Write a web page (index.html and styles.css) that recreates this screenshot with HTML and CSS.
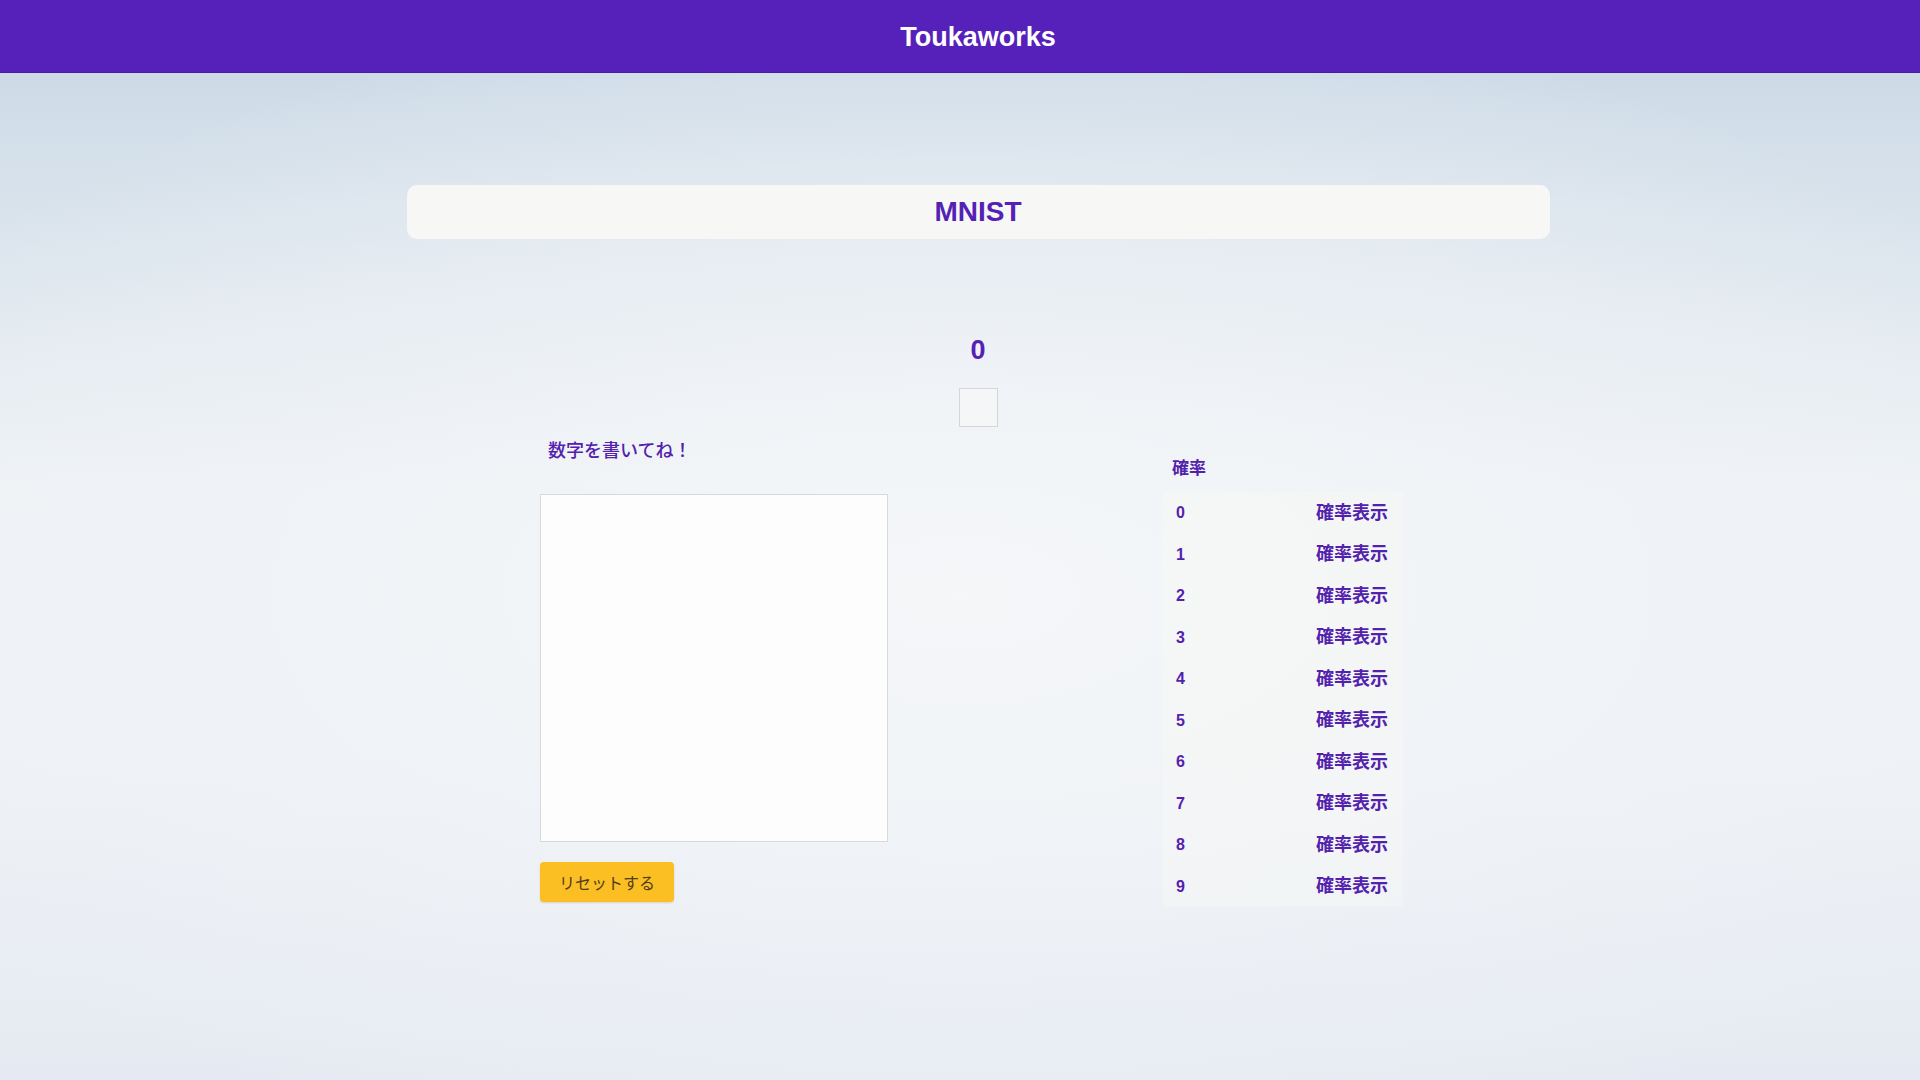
FILE: index.html
```html
<!DOCTYPE html>
<html lang="ja">
<head>
<meta charset="utf-8">
<title>Toukaworks MNIST</title>
<link rel="stylesheet" href="styles.css">
</head>
<body>
<header class="topbar">
  <h1 class="brand">Toukaworks</h1>
</header>
<main class="page">
  <section class="title-card">
    <h2 class="title">MNIST</h2>
  </section>
  <div class="prediction">0</div>
  <div class="preview"></div>
  <section class="workspace">
    <div class="draw-col">
      <p class="draw-label">数字を書いてね！</p>
      <div class="canvas"></div>
      <button class="reset-btn" type="button">リセットする</button>
    </div>
    <div class="prob-col">
      <div class="prob-head">確率</div>
      <div class="prob-table">
        <div class="prob-row"><span class="digit">0</span><span class="prob">確率表示</span></div>
        <div class="prob-row"><span class="digit">1</span><span class="prob">確率表示</span></div>
        <div class="prob-row"><span class="digit">2</span><span class="prob">確率表示</span></div>
        <div class="prob-row"><span class="digit">3</span><span class="prob">確率表示</span></div>
        <div class="prob-row"><span class="digit">4</span><span class="prob">確率表示</span></div>
        <div class="prob-row"><span class="digit">5</span><span class="prob">確率表示</span></div>
        <div class="prob-row"><span class="digit">6</span><span class="prob">確率表示</span></div>
        <div class="prob-row"><span class="digit">7</span><span class="prob">確率表示</span></div>
        <div class="prob-row"><span class="digit">8</span><span class="prob">確率表示</span></div>
        <div class="prob-row"><span class="digit">9</span><span class="prob">確率表示</span></div>
      </div>
    </div>
  </section>
</main>
</body>
</html>
```

FILE: styles.css
```css
* {
  box-sizing: border-box;
}

html, body {
  margin: 0;
  padding: 0;
}

body {
  min-height: 1080px;
  font-family: "Liberation Sans", "Noto Sans CJK JP", Arial, sans-serif;
  color: #5521b5;
  background:
    radial-gradient(ellipse 65% 55% at 50% 55%, rgba(245, 247, 249, 0.95) 0%, rgba(240, 243, 247, 0.6) 55%, rgba(240, 243, 247, 0) 100%),
    linear-gradient(to bottom, #c8d7e5 0%, #d9e3ec 20%, #eef2f5 45%, #eef1f5 70%, #e5eaf2 100%);
}

.topbar {
  height: 73px;
  background: #5620ba;
  padding-left: 36px;
  display: flex;
  align-items: center;
  justify-content: center;
  border-bottom: 1px solid #4a1ca3;
}

.brand {
  margin: 0;
  font-size: 27px;
  font-weight: 700;
  color: #ffffff;
  line-height: 1;
  padding-top: 2px;
}

.page {
  padding-left: 36px;
  display: flex;
  flex-direction: column;
  align-items: center;
}

.title-card {
  margin-top: 112px;
  width: 1143px;
  height: 54px;
  border-radius: 10px;
  background: rgba(248, 248, 246, 0.92);
  display: flex;
  align-items: center;
  justify-content: center;
}

.title {
  margin: 0;
  font-size: 28px;
  font-weight: 700;
  color: #5521b5;
  line-height: 1;
}

.prediction {
  margin-top: 95px;
  font-size: 27px;
  font-weight: 700;
  line-height: 32px;
  height: 32px;
}

.preview {
  margin-top: 22px;
  width: 39px;
  height: 39px;
  border: 1px solid #d6d6d6;
  background: rgba(250, 250, 248, 0.5);
}

.workspace {
  margin-top: 11px;
  width: 876px;
  display: flex;
  justify-content: space-between;
}

.draw-col {
  display: flex;
  flex-direction: column;
  align-items: flex-start;
}

.draw-label {
  margin: 0;
  padding-left: 8px;
  font-size: 18px;
  line-height: 26px;
  font-weight: 500;
  color: #5322ad;
}

.canvas {
  margin-top: 30px;
  width: 348px;
  height: 348px;
  border: 1px solid #d9d9d9;
  background: #fdfdfd;
}

.reset-btn {
  margin-top: 20px;
  width: 134px;
  height: 40px;
  border: none;
  border-radius: 4px;
  background: #fbbf24;
  color: #4e3e17;
  font-family: "Liberation Sans", "Noto Sans CJK JP", sans-serif;
  font-size: 16px;
  padding: 0;
  box-shadow: 0 1px 2px rgba(180, 120, 0, 0.25);
}

.prob-col {
  margin-right: 13px;
  width: 240px;
  padding-top: 18px;
}

.prob-head {
  padding-left: 9px;
  font-size: 17px;
  line-height: 26px;
  font-weight: 700;
  color: #5322ad;
}

.prob-table {
  margin-top: 10px;
  background: rgba(252, 251, 246, 0.3);
}

.prob-row {
  height: 41.5px;
  display: flex;
  align-items: center;
  justify-content: space-between;
  padding: 0 15px 0 13px;
}

.digit {
  font-size: 16px;
  line-height: 20px;
  padding-top: 1px;
  font-weight: 700;
  color: #5322ad;
}

.prob {
  font-size: 18px;
  line-height: 24px;
  font-weight: 700;
  color: #5322ad;
}
```
